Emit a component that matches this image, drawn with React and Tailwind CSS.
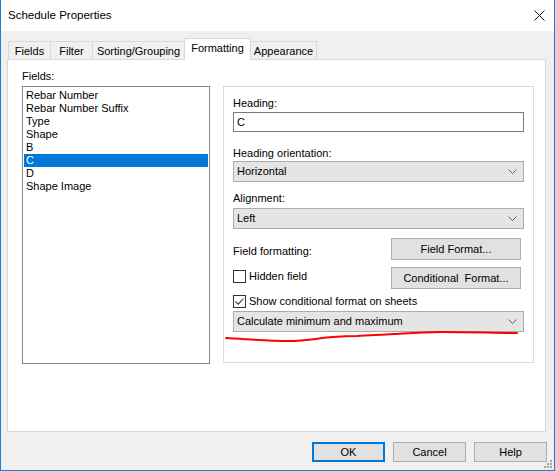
import React from 'react';

const fields = ['Rebar Number', 'Rebar Number Suffix', 'Type', 'Shape', 'B', 'C', 'D', 'Shape Image'];

const tabs = [
  { name: 'Fields', w: 'w-[43px]' },
  { name: 'Filter', w: 'w-[43px]' },
  { name: 'Sorting/Grouping', w: 'w-[93px]' },
  { name: 'Formatting', w: 'w-[67px]', active: true },
  { name: 'Appearance', w: 'w-[67px]' },
];

function Chevron() {
  return (
    <svg width="9" height="5" viewBox="0 0 9 5" className="shrink-0">
      <path d="M0.5 0.5 L4.5 4.5 L8.5 0.5" fill="none" stroke="#606060" strokeWidth="1" />
    </svg>
  );
}

function Combo({ value }) {
  return (
    <div className="h-[21px] flex items-center justify-between pl-[3px] pr-[6px] bg-[#e5e5e5] border border-[#acacac]">
      <span>{value}</span>
      <Chevron />
    </div>
  );
}

function Button({ children, className = '' }) {
  return (
    <div className={`flex items-center justify-center bg-[#e1e1e1] border border-[#adadad] ${className}`}>
      {children}
    </div>
  );
}

function Checkbox({ checked, label }) {
  return (
    <div className="flex items-center">
      <div className="w-[13px] h-[13px] border border-[#333333] bg-white flex items-center justify-center">
        {checked && (
          <svg width="11" height="11" viewBox="0 0 11 11">
            <path d="M1.5 5.5 L4.2 8.2 L9.5 2.5" fill="none" stroke="#333333" strokeWidth="1.1" />
          </svg>
        )}
      </div>
      <span className="ml-[3px] leading-[13px] pt-[1px]">{label}</span>
    </div>
  );
}

export default function App() {
  return (
    <div
      className="relative w-[555px] h-[471px] flex flex-col border-l border-r border-b border-[#1a7fd6] text-[11px] text-black select-none"
      style={{ fontFamily: '"Liberation Sans", Arial, sans-serif' }}
    >
      {/* title bar */}
      <div className="h-[31px] bg-white flex items-center justify-between pl-[7px] pr-[9px] shrink-0">
        <span className="text-[11.5px]">Schedule Properties</span>
        <svg width="11" height="11" viewBox="0 0 11 11">
          <path d="M0.5 0.5 L10.5 10.5 M10.5 0.5 L0.5 10.5" stroke="#111111" strokeWidth="1" />
        </svg>
      </div>

      <div className="flex-1 bg-[#f0f0f0] px-[6px] pt-[7px] flex flex-col">
        {/* tabs */}
        <div className="h-[21px] flex items-end pl-[1px]">
          {tabs.map((t, i) =>
            t.active ? (
              <div
                key={t.name}
                className={`${t.w} h-[22px] -mb-px -ml-px relative z-10 bg-white border border-b-0 border-[#d9d9d9] flex items-center justify-center pb-[2px]`}
              >
                {t.name}
              </div>
            ) : (
              <div
                key={t.name}
                className={`${t.w} h-[18px] ${i > 0 ? '-ml-px' : ''} bg-[#f0f0f0] border border-b-0 border-[#d9d9d9] flex items-center justify-center pt-[1px]`}
              >
                {t.name}
              </div>
            )
          )}
        </div>

        {/* tab page */}
        <div className="w-[539px] h-[373px] bg-white border border-[#d9d9d9] flex pl-[14px] pt-[10px]">
          <div className="flex flex-col">
            <div className="h-[13px] leading-[13px]">Fields:</div>
            <div className="mt-[3px] w-[188px] h-[278px] border border-[#828790] pt-[2px] px-px">
              {fields.map((f) => (
                <div
                  key={f}
                  className={`h-[13px] leading-[13px] pl-[2px] ${f === 'C' ? 'bg-[#0078d7] text-white' : ''}`}
                >
                  {f}
                </div>
              ))}
            </div>
          </div>

          {/* properties group */}
          <div className="ml-[13px] mt-[16px] w-[311px] h-[277px] border border-[#dcdcdc] px-[9px] pt-[10px] flex flex-col">
            <div className="h-[13px] leading-[13px]">Heading:</div>
            <div className="mt-[2px] h-[20px] border border-[#7a7a7a] flex items-center pl-[3px]">C</div>

            <div className="mt-[15px] h-[13px] leading-[13px]">Heading orientation:</div>
            <div className="mt-[1px]">
              <Combo value="Horizontal" />
            </div>

            <div className="mt-[10px] h-[13px] leading-[13px]">Alignment:</div>
            <div className="mt-[3px]">
              <Combo value="Left" />
            </div>

            <div className="mt-[9px] flex justify-between pr-[3px]">
              <div className="mt-[7px] h-[13px] leading-[13px]">Field formatting:</div>
              <Button className="w-[130px] h-[22px]">Field Format...</Button>
            </div>

            <div className="mt-[7px] flex justify-between items-start pr-[3px]">
              <div className="mt-[2px]">
                <Checkbox label="Hidden field" />
              </div>
              <Button className="w-[130px] h-[22px] whitespace-pre">Conditional  Format...</Button>
            </div>

            <div className="mt-[5px]">
              <Checkbox checked label="Show conditional format on sheets" />
            </div>

            <div className="mt-[3px]">
              <Combo value="Calculate minimum and maximum" />
            </div>
          </div>
        </div>

        {/* dialog buttons */}
        <div className="mt-[10px] flex justify-end gap-[8px] pr-[1px]">
          <div className="w-[73px] h-[20px] flex items-center justify-center bg-[#e1e1e1] border-2 border-[#0078d7]">OK</div>
          <Button className="w-[73px] h-[20px]">Cancel</Button>
          <Button className="w-[73px] h-[20px]">Help</Button>
        </div>
      </div>

      {/* red annotation stroke */}
      <svg className="absolute left-0 top-0 pointer-events-none" width="555" height="471">
        <path
          d="M225 338 C245 339 265 341 287 341 C305 341 318 338 332 337 C345 336 350 336 356 336 C370 335 380 335 393 334 C410 333 425 332 440 332 C470 332 495 333 516 333"
          fill="none"
          stroke="#ff0000"
          strokeWidth="2"
          strokeLinecap="round"
        />
      </svg>

      {/* resize grip */}
      <div className="absolute right-[2px] bottom-[2px] grid grid-cols-3 gap-[1px] pointer-events-none">
        <span className="w-[2px] h-[2px]" />
        <span className="w-[2px] h-[2px]" />
        <span className="w-[2px] h-[2px] bg-[#a0a0a0]" />
        <span className="w-[2px] h-[2px]" />
        <span className="w-[2px] h-[2px] bg-[#a0a0a0]" />
        <span className="w-[2px] h-[2px] bg-[#a0a0a0]" />
        <span className="w-[2px] h-[2px] bg-[#a0a0a0]" />
        <span className="w-[2px] h-[2px] bg-[#a0a0a0]" />
        <span className="w-[2px] h-[2px] bg-[#a0a0a0]" />
      </div>
    </div>
  );
}
